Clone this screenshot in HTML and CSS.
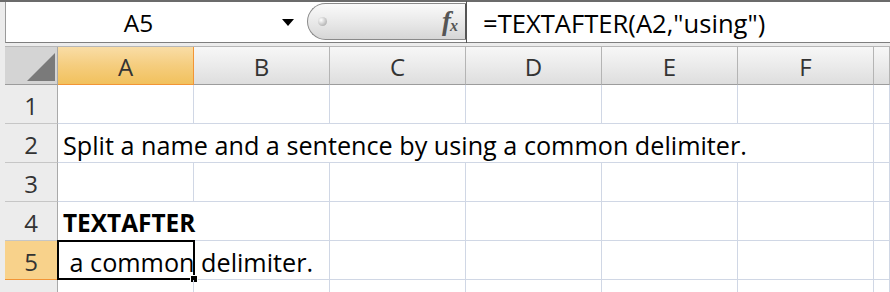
FILE: index.html
```html
<!DOCTYPE html>
<html>
<head>
    <title>TEXTAFTER</title>
    <link rel="stylesheet" href="styles.css">
</head>
<body>
    <div class="app">
        <div class="formula-bar">
            <div class="name-box">
                <span class="name">A5</span>
                <span class="arrow"></span>
            </div>
            <div class="fx-pill">
                <span class="dot"></span>
                <span class="fx">f<sub>x</sub></span>
            </div>
            <div class="formula">=TEXTAFTER(A2,"using")</div>
        </div>

        <div class="sheet">
            <div class="row head">
                <div class="corner"><span class="tri"></span></div>
                <div class="col active">A</div>
                <div class="col">B</div>
                <div class="col">C</div>
                <div class="col">D</div>
                <div class="col">E</div>
                <div class="col">F</div>
                <div class="col">&nbsp;</div>
            </div>
            <div class="row">
                <div class="num">1</div>
                <div class="cell"></div><div class="cell"></div><div class="cell"></div>
                <div class="cell"></div><div class="cell"></div><div class="cell"></div><div class="cell"></div>
            </div>
            <div class="row">
                <div class="num">2</div>
                <div class="cell span6">Split a name and a sentence by using a common delimiter.</div>
                <div class="cell"></div>
            </div>
            <div class="row">
                <div class="num">3</div>
                <div class="cell"></div><div class="cell"></div><div class="cell"></div>
                <div class="cell"></div><div class="cell"></div><div class="cell"></div><div class="cell"></div>
            </div>
            <div class="row">
                <div class="num">4</div>
                <div class="cell span2 bold">TEXTAFTER</div>
                <div class="cell"></div><div class="cell"></div><div class="cell"></div><div class="cell"></div><div class="cell"></div>
            </div>
            <div class="row">
                <div class="num active">5</div>
                <div class="cell span2">&nbsp;a common delimiter.</div>
                <div class="cell"></div><div class="cell"></div><div class="cell"></div><div class="cell"></div><div class="cell"></div>
                <div class="selected"><span class="handle"></span></div>
            </div>
            <div class="row">
                <div class="num"></div>
                <div class="cell"></div><div class="cell"></div><div class="cell"></div>
                <div class="cell"></div><div class="cell"></div><div class="cell"></div><div class="cell"></div>
            </div>
        </div>
    </div>
</body>
</html>
```

FILE: styles.css
```css
body {
    margin: 0;
    height: 292px;
    overflow: hidden;
    font-family: "Open Sans", sans-serif;
    color: #000;
    background: #fff;
}
.app {
    border-top: 2px solid #6b6b6b;
    padding-left: 5px;
    background: #ececec;
}

/* formula bar */
.formula-bar {
    display: flex;
    height: 40px;
    background: #fff;
    border-bottom: 1px solid #7e7e7e;
    border-left: 1px solid #9a9a9a;
}
.name-box {
    display: flex;
    align-items: center;
    width: 301px;
}
.name {
    width: 265px;
    text-align: center;
    font-size: 24.5px;
}
.arrow {
    margin-left: 11px;
    border-left: 6px solid transparent;
    border-right: 6px solid transparent;
    border-top: 7px solid #000;
}
.fx-pill {
    display: flex;
    align-items: center;
    justify-content: space-between;
    width: 159px;
    margin-top: 1px;
    height: 37px;
    box-sizing: border-box;
    border: 1px solid #8a8a8a;
    border-right: 1px solid #555;
    border-radius: 19px 0 0 19px;
    background: linear-gradient(#fafafa, #e6e6e6 60%, #d6d6d6);
    padding: 0 8px 0 10px;
}
.dot {
    width: 9px;
    height: 9px;
    border-radius: 50%;
    background: radial-gradient(circle at 35% 35%, #fff, #9a9a9a);
}
.fx {
    font-family: "Liberation Serif", serif;
    font-style: italic;
    font-weight: bold;
    font-size: 27px;
    color: #555;
    line-height: 1;
    letter-spacing: -1px;
}
.fx sub {
    font-size: 16px;
    vertical-align: -1px;
}
.formula {
    display: flex;
    align-items: center;
    padding: 2px 0 0 16px;
    font-size: 25.6px;
    border-left: 1px solid #555;
    margin-top: -1px;
    margin-bottom: -1px;
}

/* grid */
.sheet {
    margin-top: 3px;
    background: #fff;
}
.row {
    position: relative;
    display: grid;
    grid-template-columns: 53px repeat(6, 136px) 1fr;
    height: 39px;
}
.row.head {
    border-top: 1px solid #b6b6b6;
    height: 38px;
}
.corner {
    position: relative;
    background: #d4d4d4;
    border-right: 1px solid #a9a9a9;
    border-bottom: 1px solid #9c9c9c;
}
.tri {
    position: absolute;
    right: 2px;
    bottom: 3px;
    border-left: 28px solid transparent;
    border-bottom: 28px solid #7a7a7a;
}
.col {
    display: flex;
    justify-content: center;
    align-items: center;
    padding-top: 2px;
    font-size: 24px;
    color: #333;
    background: linear-gradient(#f7f7f7, #ebebeb 50%, #dedede);
    border-right: 1px solid #b4b4b4;
    border-bottom: 1px solid #9c9c9c;
}
.col.active {
    background: linear-gradient(#f9dda6, #f5cd7e 50%, #f1c15d);
    border-right-color: #f29536;
    border-bottom-color: #f29536;
}
.num {
    display: flex;
    justify-content: center;
    align-items: center;
    padding-top: 2px;
    font-size: 24px;
    color: #333;
    background: #ececec;
    border-right: 1px solid #a9a9a9;
    border-bottom: 1px solid #c6c6c6;
    box-sizing: border-box;
}
.num.active {
    background: #f8d28b;
    border-bottom-color: #f29536;
}
.cell {
    display: flex;
    align-items: center;
    padding: 3px 0 0 5px;
    font-size: 25.2px;
    white-space: nowrap;
    border-right: 1px solid #d0d7e5;
    border-bottom: 1px solid #d0d7e5;
    box-sizing: border-box;
}
.cell.span6 {
    grid-column: span 6;
}
.cell.span2 {
    grid-column: span 2;
}
.cell.bold {
    font-weight: bold;
    font-size: 24.4px;
}
.selected {
    position: absolute;
    left: 52px;
    top: -1px;
    width: 138px;
    height: 40px;
    box-sizing: border-box;
    border: 2px solid #000;
}
.handle {
    position: absolute;
    right: -5px;
    bottom: -5px;
    width: 6px;
    height: 6px;
    background: #000;
    border: 1px solid #fff;
}
```
